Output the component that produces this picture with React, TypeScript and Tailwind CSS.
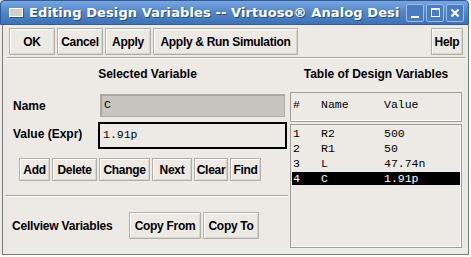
import type { ReactNode } from 'react'

const sans = { fontFamily: '"Liberation Sans", Arial, sans-serif' }
const mono = { fontFamily: '"Liberation Mono", "Courier New", monospace' }

const ROWS = [
  { n: '1', name: 'R2', value: '500' },
  { n: '2', name: 'R1', value: '50' },
  { n: '3', name: 'L', value: '47.74n' },
  { n: '4', name: 'C', value: '1.91p', selected: true },
]

function Btn({ w, h = 'h-[27px]', children }: { w: string; h?: string; children: ReactNode }) {
  return (
    <button
      className={`${w} ${h} shrink-0 flex items-center justify-center bg-[#edeae5] border border-[#b3afa7] shadow-[inset_1px_1px_0_#ffffff,inset_-1px_-1px_0_#d8d4cc] text-[12px] font-bold text-black tracking-[-0.3px]`}
      style={sans}
    >
      {children}
    </button>
  )
}

function WinBtn({ children }: { children: ReactNode }) {
  return (
    <span className="w-[18px] h-[18px] flex items-center justify-center rounded-[2px] border border-[#9bbce6] bg-[#4a7cbf]">
      {children}
    </span>
  )
}

export default function App() {
  return (
    <div className="w-[471px] h-[257px] bg-white overflow-hidden" style={sans}>
      <div className="w-[469px] h-[255px] bg-[#edeae5] flex flex-col">
        {/* title bar */}
        <div className="h-[25px] shrink-0 flex items-center rounded-t-[4px] border border-[#2f5b96] bg-gradient-to-b from-[#79a6df] via-[#5185c7] to-[#3f72b4] pl-[8px] pr-[4px]">
          <span className="w-[14px] h-[9px] shrink-0 bg-[#d4d0c8] border border-white shadow-[1px_1px_0_#2f5b96]" />
          <span
            className="ml-[6px] flex-1 whitespace-nowrap text-[13px] font-bold text-white [text-shadow:1px_1px_0_#29507f] leading-[16px] tracking-[0.1px]"
            style={{ fontFamily: '"DejaVu Sans", Verdana, sans-serif' }}
          >
            Editing Design Variables -- Virtuoso® Analog Desi
          </span>
          <div className="flex gap-[2px] ml-[2px]">
            <WinBtn>
              <span className="w-[8px] h-[2px] bg-white mt-[8px]" />
            </WinBtn>
            <WinBtn>
              <span className="w-[9px] h-[9px] border-[1.5px] border-white border-t-2" />
            </WinBtn>
            <WinBtn>
              <svg width="10" height="10" viewBox="0 0 10 10">
                <path d="M1.5 1.5 L8.5 8.5 M8.5 1.5 L1.5 8.5" stroke="white" strokeWidth="2.2" />
              </svg>
            </WinBtn>
          </div>
        </div>

        {/* body */}
        <div className="flex-1 ml-[2px] w-[467px] border-x border-b border-[#7c7c7c] flex flex-col">
          {/* toolbar */}
          <div className="flex pt-[3px] pl-[6px] pr-[5px] gap-[2px]">
            <Btn w="w-[46px]">OK</Btn>
            <Btn w="w-[46px]">Cancel</Btn>
            <Btn w="w-[46px]">Apply</Btn>
            <Btn w="w-[145px]">Apply &amp; Run Simulation</Btn>
            <div className="flex-1" />
            <Btn w="w-[32px]">Help</Btn>
          </div>
          <div className="mt-[2px] ml-[4px] mr-[2px] border-t border-[#aaa69e] border-b border-b-white" />

          <div className="flex gap-[2px]">
            {/* left column */}
            <div className="w-[285px] flex flex-col">
              <div className="mt-[8px] h-[15px] leading-[15px] text-[12px] font-bold text-center pl-[4px]">Selected Variable</div>

              <div className="mt-[12px] flex items-center h-[23px]">
                <span className="w-[97px] pl-[10px] text-[12px] font-bold">Name</span>
                <div className="w-[185px] h-[23px] bg-[#c8c4bf] border border-[#b0aca5] shadow-[inset_1px_1px_0_#a9a59e] px-[3px] pt-[2px] text-[11.5px] leading-[15px]" style={mono}>
                  C
                </div>
              </div>

              <div className="mt-[5px] flex items-center h-[27px]">
                <span className="w-[95px] pl-[10px] text-[12px] font-bold mb-[3px]">Value (Expr)</span>
                <div className="w-[189px] h-[27px] border-2 border-black bg-[#edeae5] px-[3px] pt-[3px] text-[11.5px] leading-[15px]" style={mono}>
                  1.91p
                </div>
              </div>

              <div className="mt-[9px] flex gap-[2px] pl-[16px]">
                <Btn w="w-[31px]" h="h-[23px]">Add</Btn>
                <Btn w="w-[45px]" h="h-[23px]">Delete</Btn>
                <Btn w="w-[51px]" h="h-[23px]">Change</Btn>
                <Btn w="w-[40px]" h="h-[23px]">Next</Btn>
                <Btn w="w-[34px]" h="h-[23px]">Clear</Btn>
                <Btn w="w-[31px]" h="h-[23px]">Find</Btn>
              </div>

              <div className="mt-[14px] ml-[2px] border-t border-[#aaa69e] border-b border-b-white" />

              <div className="mt-[15px] flex items-center">
                <span className="w-[126px] pl-[9px] text-[12px] font-bold tracking-[-0.2px]">Cellview Variables</span>
                <div className="flex gap-[2px]">
                  <Btn w="w-[72px]">Copy From</Btn>
                  <Btn w="w-[56px]">Copy To</Btn>
                </div>
              </div>
            </div>

            {/* right column */}
            <div className="w-[172px] flex flex-col">
              <div className="mt-[8px] h-[15px] leading-[15px] text-[12px] font-bold text-center whitespace-nowrap">Table of Design Variables</div>

              <div className="mt-[10px] h-[30px] border border-[#a29e96] shadow-[inset_-1px_-1px_0_#ffffff] flex pl-[2px] pt-[5px] text-[11.5px] leading-[13px]" style={mono}>
                <span className="w-[28px]">#</span>
                <span className="w-[63px]">Name</span>
                <span>Value</span>
              </div>

              <div className="mt-[2px] h-[124px] border border-[#a29e96] shadow-[inset_-1px_-1px_0_#ffffff] px-[1px] pt-[2px] flex flex-col gap-[2px] text-[11.5px] leading-[13px]" style={mono}>
                {ROWS.map((r) => (
                  <div key={r.n} className={`flex h-[13px] pl-[1px] ${r.selected ? 'bg-black text-white' : 'text-black'}`}>
                    <span className="w-[28px]">{r.n}</span>
                    <span className="w-[63px]">{r.name}</span>
                    <span>{r.value}</span>
                  </div>
                ))}
              </div>
            </div>
          </div>
        </div>
      </div>
    </div>
  )
}
